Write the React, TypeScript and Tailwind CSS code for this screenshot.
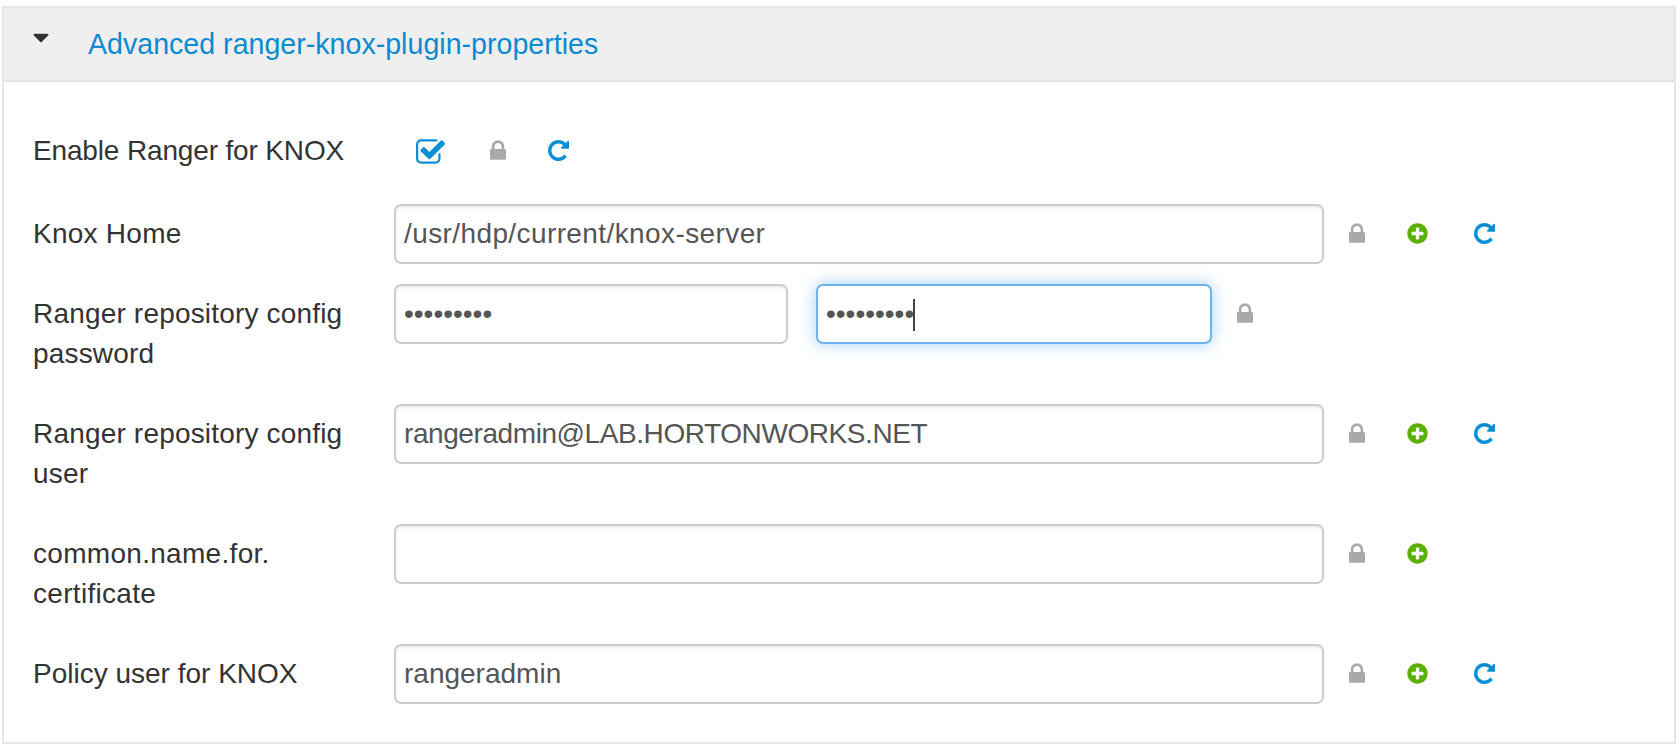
import { FaCaretDown, FaPlusCircle } from "react-icons/fa";

function CheckSquare() {
  return (
    <svg viewBox="0 128 1664 1408" className="w-[29px] h-[25px] text-[#0a8fd6]" fill="currentColor">
      <path d="M1408 930v318q0 119-84.5 203.5T1120 1536H288q-119 0-203.5-84.5T0 1248V416q0-119 84.5-203.5T288 128h832q63 0 117 25 15 7 18 23 3 17-9 29l-49 49q-10 10-23 10-3 0-9-2-23-6-45-6H288q-66 0-113 47t-47 113v832q0 66 47 113t113 47h832q66 0 113-47t47-113V994q0-13 9-22l64-64q10-10 23-10 6 0 12 3 20 8 20 29zm231-489l-814 814q-24 24-57 24t-57-24L281 825q-24-24-24-57t24-57l110-110q24-24 57-24t57 24l263 263 647-647q24-24 57-24t57 24l110 110q24 24 24 57t-24 57z" />
    </svg>
  );
}

function Lock() {
  return (
    <svg viewBox="0 128 1152 1408" className="w-[16px] h-[20px] mb-[2px] text-[#a9a9a9]" fill="currentColor">
      <path d="M320 768h512V576q0-106-75-181t-181-75-181 75-75 181v192zm832 96v576q0 40-28 68t-68 28H96q-40 0-68-28t-28-68V864q0-40 28-68t68-28h32V576q0-184 132-316t316-132 316 132 132 316v192h32q40 0 68 28t28 68z" />
    </svg>
  );
}
function Plus() {
  return <FaPlusCircle className="text-[#5cb000] w-[21px] h-[21px] mb-[1px]" />;
}
function Redo() {
  return (
    <svg viewBox="0 128 1536 1536" className="w-[21px] h-[21px] mb-[1px] text-[#0a8fd6]" fill="currentColor">
      <path d="M1536 256v448q0 26-19 45t-45 19h-448q-42 0-59-40-17-39 14-69l138-138q-148-137-349-137-104 0-198.5 40.5t-163.5 109.5-109.5 163.5-40.5 198.5 40.5 198.5 109.5 163.5 163.5 109.5 198.5 40.5q119 0 225-52t179-147q7-10 23-12 12 0 25 9l137 138q9 8 9.5 20.5t-7.5 22.5q-109 132-264 204.5t-327 72.5q-156 0-298-61t-245-164-164-245-61-298 61-298 164-245 245-164 298-61q147 0 284.5 55.5t244.5 156.5l130-129q29-31 70-14 39 17 39 59z" />
    </svg>
  );
}

function Field({ value, spacing = "" }: { value: string; spacing?: string }) {
  return (
    <input
      readOnly
      value={value}
      className={
        "w-[930px] h-[60px] border-2 border-[#cccccc] rounded-[7px] px-[8px] text-[28px] text-[#555555] outline-none shadow-[inset_0_2px_2px_rgba(0,0,0,0.075)] bg-white " +
        spacing
      }
    />
  );
}

function Actions({ plus = true, redo = true }: { plus?: boolean; redo?: boolean }) {
  return (
    <div className="flex items-center h-[60px] ml-[25px]">
      <div className="w-[58px] flex">
        <Lock />
      </div>
      {plus && (
        <div className="w-[67px] flex">
          <Plus />
        </div>
      )}
      {redo && <Redo />}
    </div>
  );
}

function Row({
  label,
  tall,
  spacing = "",
  children,
}: {
  label: string;
  tall?: boolean;
  spacing?: string;
  children: React.ReactNode;
}) {
  return (
    <div className={tall ? "flex h-[120px]" : "flex h-[80px]"}>
      <div className={"w-[361px] pt-[10px] pr-[12px] leading-[40px] " + spacing}>{label}</div>
      {children}
    </div>
  );
}

export default function App() {
  return (
    <div
      className="h-[752px] bg-white pt-[6px] pl-[2px] pr-[4px] text-[28px] text-[#333333]"
      style={{ fontFamily: '"Liberation Sans", Arial, sans-serif' }}
    >
      <div className="border-2 border-[#e6e6e6] h-[738px]">
        <div className="h-[74px] bg-[#efefef] border-b-2 border-[#e3e3e3] flex items-center">
          <FaCaretDown className="text-[#333333] w-[16px] h-[26px] ml-[29px] mb-[14px]" />
          <span className="ml-[39px] text-[#0a8ad0] text-[28.6px]">Advanced ranger-knox-plugin-properties</span>
        </div>
        <div className="pl-[29px] pt-[42px]">
          <div className="flex h-[80px] pt-[7px]">
            <div className="w-[383px] leading-[40px] tracking-[-0.15px]">Enable Ranger for KNOX</div>
            <div className="flex items-center h-[40px]">
              <div className="w-[74px] flex">
                <CheckSquare />
              </div>
              <div className="w-[58px] flex">
                <Lock />
              </div>
              <Redo />
            </div>
          </div>
          <Row label="Knox Home" spacing="tracking-[0.25px]">
            <Field value="/usr/hdp/current/knox-server" spacing="tracking-[0.4px]" />
            <Actions />
          </Row>
          <Row label="Ranger repository config password" tall spacing="tracking-[0.18px]">
            <div className="flex gap-[28px] h-[60px]">
              <input
                readOnly
                type="password"
                value="123456789"
                className="w-[394px] h-[60px] border-2 border-[#cccccc] rounded-[7px] px-[8px] text-[28px] text-[#555555] outline-none shadow-[inset_0_2px_2px_rgba(0,0,0,0.075)] bg-white"
              />
              <div className="relative">
                <input
                  readOnly
                  type="password"
                  value="123456789"
                  className="w-[396px] h-[60px] border-2 border-[#6db4ec] rounded-[7px] px-[8px] text-[28px] text-[#555555] outline-none shadow-[0_0_16px_rgba(102,175,233,0.6)] bg-white"
                />
                <span className="absolute left-[97px] top-[15px] w-[2px] h-[32px] bg-[#444444]" />
              </div>
            </div>
            <div className="flex items-center h-[60px] ml-[25px]">
              <Lock />
            </div>
          </Row>
          <Row label="Ranger repository config user" tall spacing="tracking-[0.18px]">
            <Field value="rangeradmin@LAB.HORTONWORKS.NET" spacing="tracking-[-0.42px]" />
            <Actions />
          </Row>
          <Row label="common.name.for. certificate" tall spacing="tracking-[0.3px]">
            <Field value="" />
            <Actions redo={false} />
          </Row>
          <Row label="Policy user for KNOX">
            <Field value="rangeradmin" />
            <Actions />
          </Row>
        </div>
      </div>
    </div>
  );
}
